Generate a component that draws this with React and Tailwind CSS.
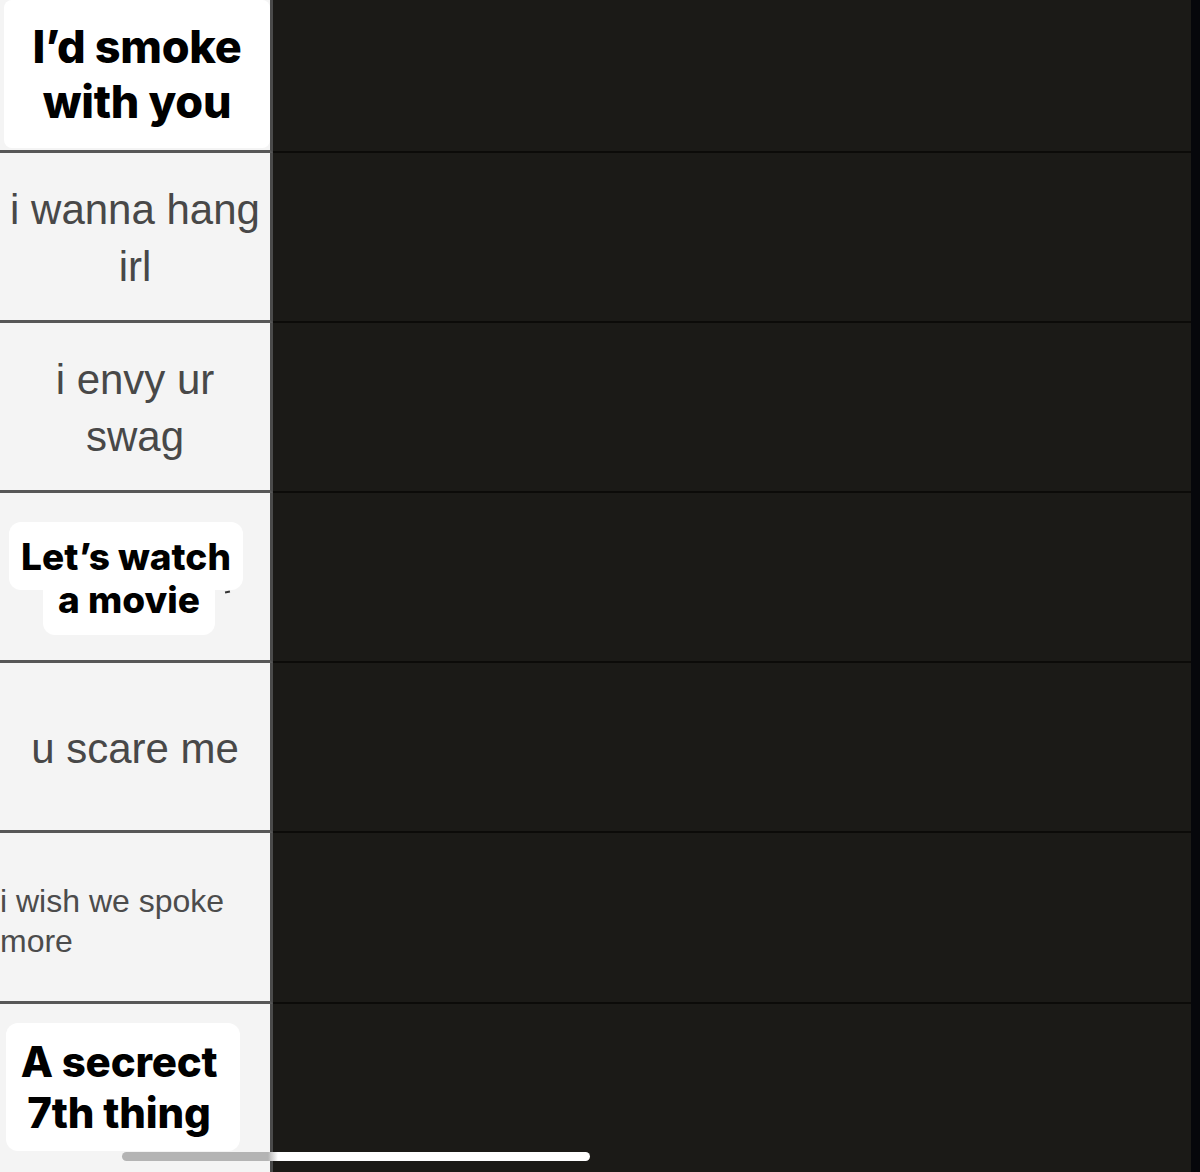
import React from 'react';

const sans = "font-['Liberation_Sans',Arial,sans-serif]";
const bold = "font-['Inter','Open_Sans',sans-serif] font-extrabold text-black";

function Row({ height, last, children }) {
    return (
        <div className={`flex ${height}`}>
            <div className={`relative w-[273px] shrink-0 bg-[#f4f4f4] border-r-[3px] border-r-[#4a4a4a] overflow-hidden ${last ? '' : 'border-b-[3px] border-b-[#575757]'}`}>
                {children}
            </div>
            <div className={`flex-1 ${last ? '' : 'border-b-2 border-b-[#0c0b09]'}`}></div>
        </div>
    );
}

export default function App() {
    return (
        <div className="relative w-[1200px] h-[1172px] flex bg-[#1b1a17] overflow-hidden">
            <div className="flex-1 flex flex-col">
                {/* Row 1 */}
                <Row height="h-[153px]">
                    <div className="h-full pl-[4px] pb-[2px]">
                        <div className={`h-full bg-white rounded-lg flex flex-col items-center justify-center text-[45px] leading-[55px] tracking-[-0.3px] ${bold}`}>
                            <span>I’d smoke</span>
                            <span>with you</span>
                        </div>
                    </div>
                </Row>

                {/* Row 2 */}
                <Row height="h-[170px]">
                    <div className={`h-full flex flex-col items-center justify-center pt-[2px] text-[42px] leading-[57px] text-[#484848] ${sans}`}>
                        <span>i wanna hang</span>
                        <span>irl</span>
                    </div>
                </Row>

                {/* Row 3 */}
                <Row height="h-[170px]">
                    <div className={`h-full flex flex-col items-center justify-center pt-[2px] text-[42px] leading-[57px] text-[#484848] ${sans}`}>
                        <span>i envy ur</span>
                        <span>swag</span>
                    </div>
                </Row>

                {/* Row 4 */}
                <Row height="h-[170px]">
                    <div className={`h-full flex flex-col items-center pt-[29px] pr-[18px] text-[37px] leading-[43px] ${bold}`}>
                        <div className="bg-white rounded-xl px-[12px] pt-[13px] pb-[12px]">Let’s watch</div>
                        <div className="-mt-[12px] bg-white rounded-xl px-[15px] pb-[14px] ml-[6px]">a movie</div>
                    </div>
                    <span className="absolute left-[225px] top-[98px] w-[5px] h-[2px] bg-[#333] -rotate-12"></span>
                </Row>

                {/* Row 5 */}
                <Row height="h-[170px]">
                    <div className={`h-full flex items-center justify-center pt-[4px] text-[42px] leading-[57px] text-[#484848] ${sans}`}>
                        <span>u scare me</span>
                    </div>
                </Row>

                {/* Row 6 */}
                <Row height="h-[171px]">
                    <div className={`h-full flex flex-col justify-center pt-[8px] text-[32px] leading-[40px] text-[#4c4c4c] ${sans}`}>
                        <span>i wish we spoke</span>
                        <span>more</span>
                    </div>
                </Row>

                {/* Row 7 */}
                <Row height="flex-1" last>
                    <div className="h-full pl-[6px] pr-[30px] pt-[19px] pb-[21px]">
                        <div className={`h-full bg-white rounded-xl flex flex-col items-center justify-center text-[42px] leading-[51px] tracking-[-0.2px] pr-[8px] ${bold}`}>
                            <span>A secrect</span>
                            <span>7th thing</span>
                        </div>
                    </div>
                </Row>
            </div>
            <div className="w-[9px] shrink-0 bg-[#06070b]"></div>

            {/* home indicator */}
            <div className="absolute left-[122px] top-[1152px] w-[468px] h-[9px] rounded-full bg-[linear-gradient(to_right,#b4b4b4_0px,#b4b4b4_146px,#ffffff_156px)]"></div>
        </div>
    );
}
